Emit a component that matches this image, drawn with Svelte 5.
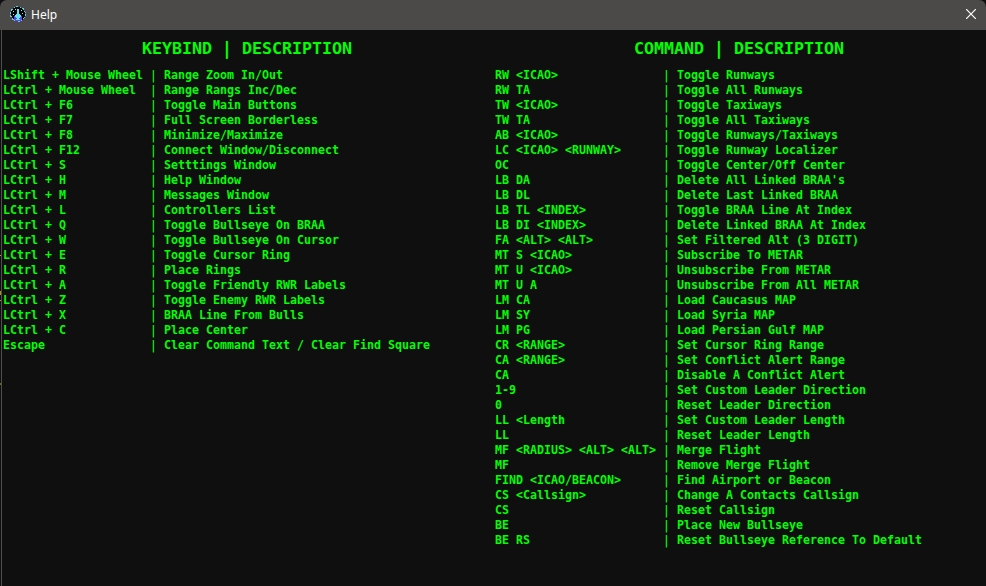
<script>
  const keybinds = [
    ['LShift + Mouse Wheel', 'Range Zoom In/Out'],
    ['LCtrl + Mouse Wheel', 'Range Rangs Inc/Dec'],
    ['LCtrl + F6', 'Toggle Main Buttons'],
    ['LCtrl + F7', 'Full Screen Borderless'],
    ['LCtrl + F8', 'Minimize/Maximize'],
    ['LCtrl + F12', 'Connect Window/Disconnect'],
    ['LCtrl + S', 'Setttings Window'],
    ['LCtrl + H', 'Help Window'],
    ['LCtrl + M', 'Messages Window'],
    ['LCtrl + L', 'Controllers List'],
    ['LCtrl + Q', 'Toggle Bullseye On BRAA'],
    ['LCtrl + W', 'Toggle Bullseye On Cursor'],
    ['LCtrl + E', 'Toggle Cursor Ring'],
    ['LCtrl + R', 'Place Rings'],
    ['LCtrl + A', 'Toggle Friendly RWR Labels'],
    ['LCtrl + Z', 'Toggle Enemy RWR Labels'],
    ['LCtrl + X', 'BRAA Line From Bulls'],
    ['LCtrl + C', 'Place Center'],
    ['Escape', 'Clear Command Text / Clear Find Square'],
  ];

  const commands = [
    ['RW <ICAO>', 'Toggle Runways'],
    ['RW TA', 'Toggle All Runways'],
    ['TW <ICAO>', 'Toggle Taxiways'],
    ['TW TA', 'Toggle All Taxiways'],
    ['AB <ICAO>', 'Toggle Runways/Taxiways'],
    ['LC <ICAO> <RUNWAY>', 'Toggle Runway Localizer'],
    ['OC', 'Toggle Center/Off Center'],
    ['LB DA', "Delete All Linked BRAA's"],
    ['LB DL', 'Delete Last Linked BRAA'],
    ['LB TL <INDEX>', 'Toggle BRAA Line At Index'],
    ['LB DI <INDEX>', 'Delete Linked BRAA At Index'],
    ['FA <ALT> <ALT>', 'Set Filtered Alt (3 DIGIT)'],
    ['MT S <ICAO>', 'Subscribe To METAR'],
    ['MT U <ICAO>', 'Unsubscribe From METAR'],
    ['MT U A', 'Unsubscribe From All METAR'],
    ['LM CA', 'Load Caucasus MAP'],
    ['LM SY', 'Load Syria MAP'],
    ['LM PG', 'Load Persian Gulf MAP'],
    ['CR <RANGE>', 'Set Cursor Ring Range'],
    ['CA <RANGE>', 'Set Conflict Alert Range'],
    ['CA', 'Disable A Conflict Alert'],
    ['1-9', 'Set Custom Leader Direction'],
    ['0', 'Reset Leader Direction'],
    ['LL <Length', 'Set Custom Leader Length'],
    ['LL', 'Reset Leader Length'],
    ['MF <RADIUS> <ALT> <ALT>', 'Merge Flight'],
    ['MF', 'Remove Merge Flight'],
    ['FIND <ICAO/BEACON>', 'Find Airport or Beacon'],
    ['CS <Callsign>', 'Change A Contacts Callsign'],
    ['CS', 'Reset Callsign'],
    ['BE', 'Place New Bullseye'],
    ['BE RS', 'Reset Bullseye Reference To Default'],
  ];

  const panels = [
    { id: 'keys', title: 'KEYBIND', rows: keybinds },
    { id: 'commands', title: 'COMMAND', rows: commands },
  ];
</script>

<div class="window">
  <header>
    <svg class="logo" width="16" height="16" viewBox="0 0 16 16" shape-rendering="crispEdges">
      <circle cx="8" cy="8" r="7.4" fill="#050505" stroke="#58cfe4" stroke-width="1" stroke-dasharray="2 1.3" />
      <path d="M4 10h8v4h-1v1H5v-1H4z" fill="#6541ef" />
      <path d="M7 3h2v5h1v1h1v2h-1v1H9v1h1v1H6v-1h1v-1H6v-1H5V9h1V8h1z" fill="#64e4ec" />
      <path d="M3 5h1v1H3zM5 3h1v1H5zM11 4h1v1h-1zM12 7h1v1h-1zM3 8h1v1H3z" fill="#b9dbe0" />
    </svg>
    <span class="caption">Help</span>
    <button aria-label="Close">
      <svg width="10" height="10" viewBox="0 0 10 10"><path d="M0 0L10 10M10 0L0 10" stroke="#fff" stroke-width="1.2" /></svg>
    </button>
  </header>
  <main>
    {#each panels as panel}
      <section class={panel.id}>
        <h2><span class="heading">{panel.title}</span><span class="bar">|</span><span>DESCRIPTION</span></h2>
        {#each panel.rows as [term, text]}
          <div class="row"><span class="term">{term}</span><span class="bar">|</span><span>{text}</span></div>
        {/each}
      </section>
    {/each}
  </main>
</div>

<style>
  :global(body) { background: #101010; }
  .window {
    box-sizing: border-box;
    width: 986px;
    height: 586px;
    display: flex;
    flex-direction: column;
    overflow: hidden;
    /* slivers of the map showing past the window's left edge */
    background:
      linear-gradient(#b5a318, #b5a318) 0 255px / 1px 1px no-repeat,
      linear-gradient(#a29c00, #a29c00) 0 291px / 1px 4px no-repeat,
      linear-gradient(#b5a318, #b5a318) 0 300px / 1px 1px no-repeat,
      linear-gradient(#756d00, #756d00) 0 383px / 1px 2px no-repeat,
      #0f0f0f;
  }
  header {
    flex: none;
    height: 30px;
    box-sizing: border-box;
    display: flex;
    align-items: center;
    padding: 0 10px;
    background: #4b4a48;
    border-radius: 7px 7px 0 0;
  }
  .logo { margin: -2px 5px 0 0; }
  .caption {
    color: #fff;
    font: 12px/16px "Noto Sans", "Open Sans", sans-serif;
    flex: 1;
  }
  button {
    display: flex;
    padding: 0;
    border: 0;
    background: none;
    margin: -2px 0 0;
  }
  main {
    flex: 1;
    display: flex;
    margin-left: 1px;
    border-left: 1px solid #4e4e4e;
    color: #00ff00;
    font-family: "DejaVu Sans Mono", "Liberation Mono", monospace;
    font-weight: bold;
  }
  section { width: 492px; padding-left: 1px; box-sizing: border-box; }
  h2, .row { display: flex; white-space: pre; }
  h2 {
    margin: 0;
    height: 38px;
    font-size: 16.61px;
    line-height: 37px;
    padding-left: 139px;
    box-sizing: border-box;
  }
  .heading { width: 80px; }
  .row { height: 15px; font-size: 11.63px; line-height: 15px; }
  .term { width: 147px; }
  .commands .term { width: 168px; }
  .bar {
    display: flex;
    justify-content: center;
    width: 7px;
    margin-right: 7px;
    font-size: 13px;
    font-weight: normal;
  }
  h2 .bar {
    width: 10px;
    margin-right: 10px;
    font-size: 18px;
    font-weight: bold;
  }
</style>
